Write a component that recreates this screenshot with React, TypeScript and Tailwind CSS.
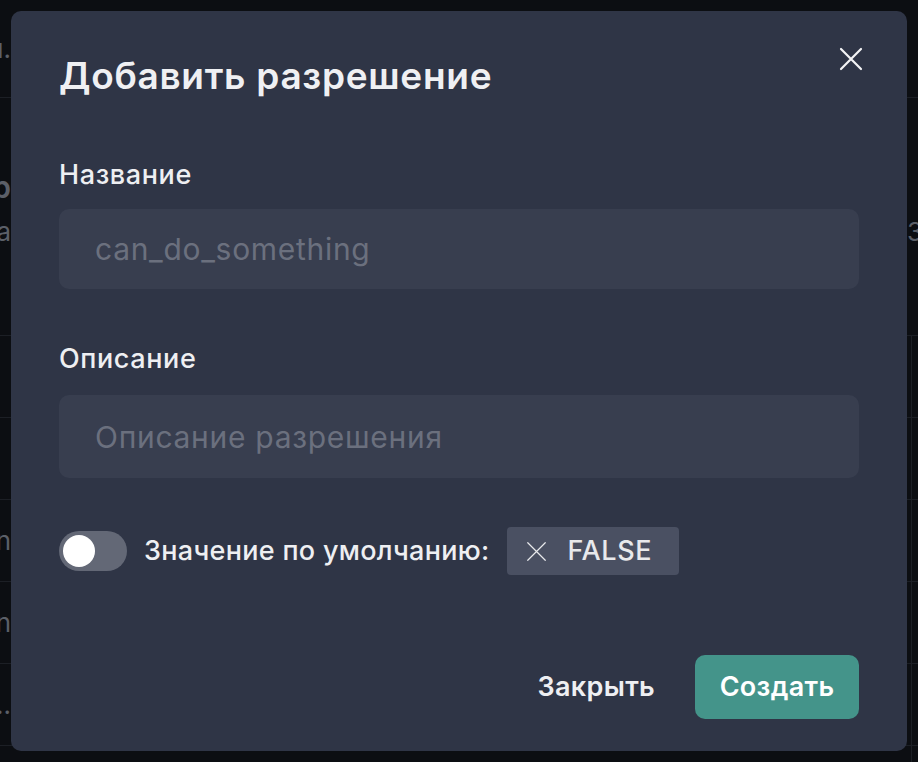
import React, { useState } from "react";

const rowMarks = ["", "", "nn", "nn", "...", "..."];

const CloseIcon: React.FC<{ className?: string; strokeWidth?: number }> = ({
  className,
  strokeWidth = 2.2,
}) => (
  <svg
    viewBox="0 0 24 24"
    fill="none"
    stroke="currentColor"
    strokeWidth={strokeWidth}
    strokeLinecap="round"
    className={className}
  >
    <path d="M2 2L22 22M22 2L2 22" />
  </svg>
);

const App: React.FC = () => {
  const [isDefault, setIsDefault] = useState(false);

  return (
    <div
      className="relative w-[918px] h-[762px] overflow-hidden bg-[#0c0e12] text-[#5b5f68]"
      style={{ fontFamily: "Inter, 'Noto Sans', sans-serif" }}
    >
      {/* page behind the modal, only edges show */}
      <div className="flex flex-col">
        <div className="h-[98px] border-b border-[#1c1f25] flex items-center justify-between text-[26px]">
          <span className="w-[11px] overflow-hidden whitespace-nowrap flex justify-end">
            <span className="shrink-0">Им.</span>
          </span>
        </div>
        <div className="h-[237px] flex flex-col">
          <div className="h-[112px] flex items-end text-[30px] font-semibold">
            <span className="w-[11px] overflow-hidden whitespace-nowrap flex justify-end">
              <span className="shrink-0">Пр</span>
            </span>
          </div>
          <div className="h-[42px] flex items-center justify-between text-[26px]">
            <span className="w-[11px] overflow-hidden whitespace-nowrap flex justify-end">
              <span className="shrink-0">Ка</span>
            </span>
            <span className="w-[11px] overflow-hidden whitespace-nowrap">Зн</span>
          </div>
        </div>
        {rowMarks.map((m, i) => (
          <div
            key={i}
            className="h-[82px] border-t border-[#1c1f25] flex items-center justify-between text-[26px]"
          >
            <span className="w-[11px] overflow-hidden whitespace-nowrap flex justify-end">
              <span className="shrink-0">{m}</span>
            </span>
            <span className="w-[7px] h-full border-l border-[#1c1f25]" />
          </div>
        ))}
      </div>

      {/* overlay + modal */}
      <div className="absolute inset-0 flex items-center justify-center">
        <div className="w-[896px] h-[740px] rounded-[10px] bg-[#2f3546] px-[48px] pb-[32px] flex flex-col relative">
          <button className="absolute right-[44px] top-[36px] w-[24px] h-[24px] text-[#f4f4f6]">
            <CloseIcon className="w-[24px] h-[24px]" />
          </button>

          <h2 className="pt-[44px] text-[37px] leading-[42px] font-semibold text-[#eff0f3] tracking-[0.7px]">
            Добавить разрешение
          </h2>

          <label className="mt-[62px] text-[27px] leading-[32px] font-medium text-[#eeeff2] tracking-[0.6px]">
            Название
          </label>
          <input
            placeholder="can_do_something"
            className="mt-[18px] h-[80px] w-full rounded-[10px] bg-[#383e4f] px-[36px] text-[30px] text-[#eeeff2] placeholder:text-[#6b707e] outline-none tracking-[0.7px]"
          />

          <label className="mt-[54px] text-[27px] leading-[32px] font-medium text-[#eeeff2] tracking-[0.6px]">
            Описание
          </label>
          <input
            placeholder="Описание разрешения"
            className="mt-[20px] h-[83px] w-full rounded-[10px] bg-[#383e4f] px-[36px] text-[30px] text-[#eeeff2] placeholder:text-[#6b707e] outline-none tracking-[0.7px]"
          />

          <div className="mt-[49px] h-[48px] flex items-center">
            <button
              onClick={() => setIsDefault(!isDefault)}
              className={
                "w-[68px] h-[40px] rounded-full p-[4px] flex items-center " +
                (isDefault ? "bg-[#44948a] justify-end" : "bg-[#636876] justify-start")
              }
            >
              <span className="w-[32px] h-[32px] rounded-full bg-white" />
            </button>
            <span className="ml-[17px] text-[27px] font-medium text-[#eeeff2] tracking-[0.3px]">
              Значение по умолчанию:
            </span>
            <span className="ml-[17px] h-[48px] w-[172px] rounded-[4px] bg-[#4a5062] flex items-center pl-[19px] text-[#e8e9ec]">
              <CloseIcon className="w-[21px] h-[21px]" strokeWidth={1.4} />
              <span className="ml-[21px] text-[27px] font-medium tracking-[0.6px]">
                {isDefault ? "TRUE" : "FALSE"}
              </span>
            </span>
          </div>

          <div className="mt-auto flex justify-end items-center gap-[40px]">
            <button className="text-[27px] font-semibold text-[#eeeff2] tracking-[0.3px]">
              Закрыть
            </button>
            <button className="h-[64px] w-[164px] rounded-[10px] bg-[#44948a] text-[27px] font-semibold text-white tracking-[0.3px]">
              Создать
            </button>
          </div>
        </div>
      </div>
    </div>
  );
};

export default App;
